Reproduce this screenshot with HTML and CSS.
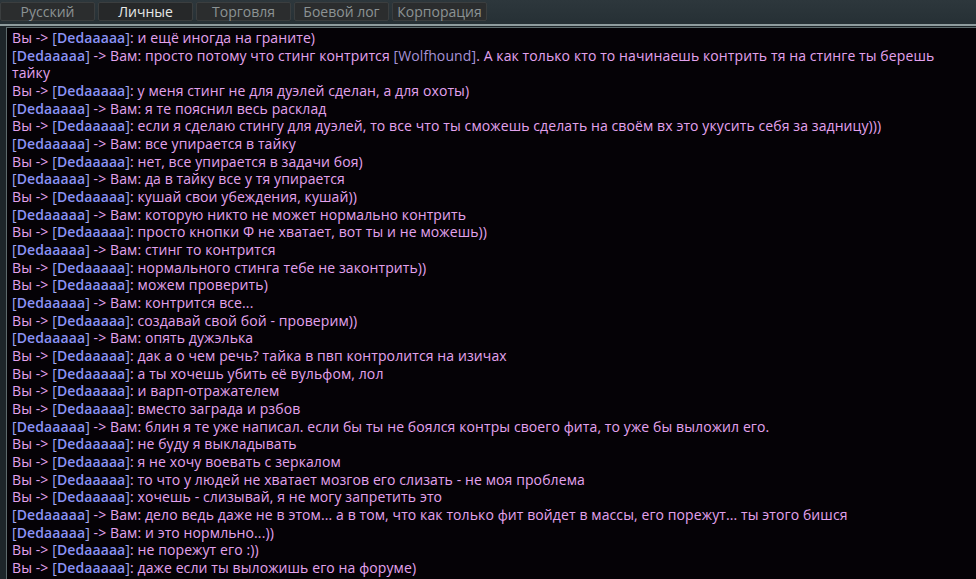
FILE: index.html
```html
<!DOCTYPE html>
<html>
<head>
    <meta charset="UTF-8">
    <title>Чат</title>
    <link rel="stylesheet" href="styles.css">
</head>
<body>
    <div class="window">
        <ul class="tabs">
            <li>Русский</li>
            <li class="active">Личные</li>
            <li>Торговля</li>
            <li>Боевой лог</li>
            <li>Корпорация</li>
        </ul>
        <div class="chat">
            <p>Вы -&gt; <span class="nick"><b>Dedaaaaa</b></span>: и ещё иногда на граните)</p>
            <p><span class="nick"><b>Dedaaaaa</b></span> -&gt; Вам: просто потому что стинг контрится <span class="item">[Wolfhound]</span>. А как только кто то начинаешь контрить тя на стинге ты берешь тайку</p>
            <p>Вы -&gt; <span class="nick"><b>Dedaaaaa</b></span>: у меня стинг не для дуэлей сделан, а для охоты)</p>
            <p><span class="nick"><b>Dedaaaaa</b></span> -&gt; Вам: я те пояснил весь расклад</p>
            <p>Вы -&gt; <span class="nick"><b>Dedaaaaa</b></span>: если я сделаю стингу для дуэлей, то все что ты сможешь сделать на своём вх это укусить себя за задницу)))</p>
            <p><span class="nick"><b>Dedaaaaa</b></span> -&gt; Вам: все упирается в тайку</p>
            <p>Вы -&gt; <span class="nick"><b>Dedaaaaa</b></span>: нет, все упирается в задачи боя)</p>
            <p><span class="nick"><b>Dedaaaaa</b></span> -&gt; Вам: да в тайку все у тя упирается</p>
            <p>Вы -&gt; <span class="nick"><b>Dedaaaaa</b></span>: кушай свои убеждения, кушай))</p>
            <p><span class="nick"><b>Dedaaaaa</b></span> -&gt; Вам: которую никто не может нормально контрить</p>
            <p>Вы -&gt; <span class="nick"><b>Dedaaaaa</b></span>: просто кнопки Ф не хватает, вот ты и не можешь))</p>
            <p><span class="nick"><b>Dedaaaaa</b></span> -&gt; Вам: стинг то контрится</p>
            <p>Вы -&gt; <span class="nick"><b>Dedaaaaa</b></span>: нормального стинга тебе не законтрить))</p>
            <p>Вы -&gt; <span class="nick"><b>Dedaaaaa</b></span>: можем проверить)</p>
            <p><span class="nick"><b>Dedaaaaa</b></span> -&gt; Вам: контрится все...</p>
            <p>Вы -&gt; <span class="nick"><b>Dedaaaaa</b></span>: создавай свой бой - проверим))</p>
            <p><span class="nick"><b>Dedaaaaa</b></span> -&gt; Вам: опять дужэлька</p>
            <p>Вы -&gt; <span class="nick"><b>Dedaaaaa</b></span>: дак а о чем речь? тайка в пвп контролится на изичах</p>
            <p>Вы -&gt; <span class="nick"><b>Dedaaaaa</b></span>: а ты хочешь убить её вульфом, лол</p>
            <p>Вы -&gt; <span class="nick"><b>Dedaaaaa</b></span>: и варп-отражателем</p>
            <p>Вы -&gt; <span class="nick"><b>Dedaaaaa</b></span>: вместо заграда и рзбов</p>
            <p><span class="nick"><b>Dedaaaaa</b></span> -&gt; Вам: блин я те уже написал. если бы ты не боялся контры своего фита, то уже бы выложил его.</p>
            <p>Вы -&gt; <span class="nick"><b>Dedaaaaa</b></span>: не буду я выкладывать</p>
            <p>Вы -&gt; <span class="nick"><b>Dedaaaaa</b></span>: я не хочу воевать с зеркалом</p>
            <p>Вы -&gt; <span class="nick"><b>Dedaaaaa</b></span>: то что у людей не хватает мозгов его слизать - не моя проблема</p>
            <p>Вы -&gt; <span class="nick"><b>Dedaaaaa</b></span>: хочешь - слизывай, я не могу запретить это</p>
            <p><span class="nick"><b>Dedaaaaa</b></span> -&gt; Вам: дело ведь даже не в этом... а в том, что как только фит войдет в массы, его порежут... ты этого бишся</p>
            <p><span class="nick"><b>Dedaaaaa</b></span> -&gt; Вам: и это нормльно...))</p>
            <p>Вы -&gt; <span class="nick"><b>Dedaaaaa</b></span>: не порежут его :))</p>
            <p>Вы -&gt; <span class="nick"><b>Dedaaaaa</b></span>: даже если ты выложишь его на форуме)</p>
        </div>
    </div>
</body>
</html>
```

FILE: styles.css
```css
body{margin:0;background:#1d2529;font-family:"Open Sans","DejaVu Sans",sans-serif;}
ul,li,p{margin:0;padding:0;list-style:none;}
html, body{
    height: 100%;
    overflow: hidden;
}

.window{
    height: 100%;
    display: flex;
    flex-direction: column;
}

/* вкладки */
.tabs{
    display: flex;
    gap: 3px;
    height: 26px;
    padding: 2px 0 0 0;
    box-sizing: border-box;
    background: linear-gradient(#2d373c, #263035);
    border-bottom: 2px solid #8f9c9e;
}
.tabs li{
    width: 95px;
    height: 19px;
    line-height: 18px;
    text-align: center;
    font-size: 14px;
    color: #8c9394;
    background: #2b2d2e;
    border: 1px solid #3b3e3f;
    border-radius: 2px;
    box-sizing: border-box;
}
.tabs li.active{
    color: #e6e8e8;
    background: #262829;
}

/* окно чата */
.chat{
    flex: 1;
    margin: 1px 0 0 6px;
    padding: 1px 0 0 5px;
    background: #050206;
    border-top: 1px solid #5d6a6c;
    border-left: 1px solid #5d6a6c;
    font-size: 14px;
    letter-spacing: 0.1px;
    line-height: 17.67px;
    color: #e3a2ee;
}
.chat p{
    padding-right: 8px;
}
.nick{
    color: #a4a9f5;
}
.nick::before{content: "[";}
.nick::after{content: "]";}
.nick b{
    color: #8b93f6;
    font-weight: 600;
}
.item{
    color: #a693d8;
}
```
